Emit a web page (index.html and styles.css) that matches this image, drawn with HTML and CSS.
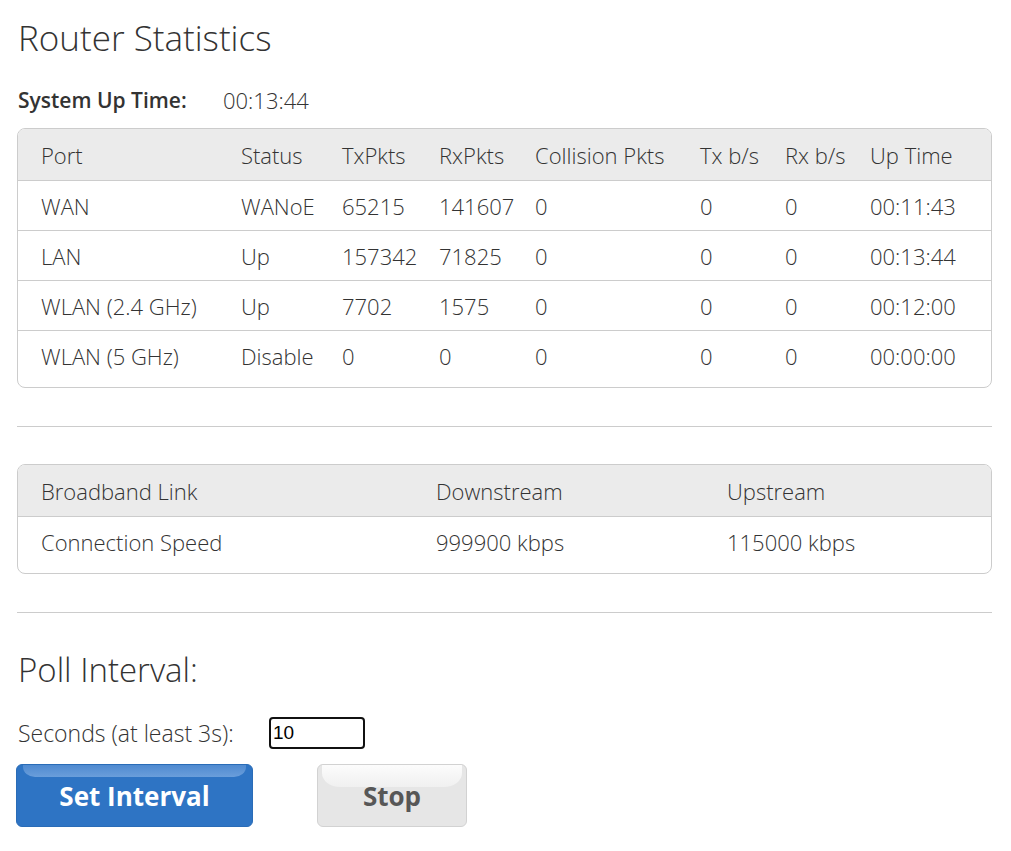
FILE: index.html
```html
<!DOCTYPE html>
<html>
<head>
<meta charset="utf-8">
<link rel="stylesheet" href="styles.css">
</head>
<body>
<div class="page">
  <h1 class="title">Router Statistics</h1>
  <div class="uptime"><span class="uptime-label">System Up Time:</span><span class="uptime-value">00:13:44</span></div>

  <div class="box box-ports">
    <table class="grid ports">
      <colgroup>
        <col class="c1"><col class="c2"><col class="c3"><col class="c4"><col class="c5"><col class="c6"><col class="c7"><col class="c8">
      </colgroup>
      <thead>
        <tr><th>Port</th><th>Status</th><th>TxPkts</th><th>RxPkts</th><th>Collision Pkts</th><th>Tx b/s</th><th>Rx b/s</th><th>Up Time</th></tr>
      </thead>
      <tbody>
        <tr><td>WAN</td><td>WANoE</td><td>65215</td><td>141607</td><td>0</td><td>0</td><td>0</td><td>00:11:43</td></tr>
        <tr><td>LAN</td><td>Up</td><td>157342</td><td>71825</td><td>0</td><td>0</td><td>0</td><td>00:13:44</td></tr>
        <tr><td>WLAN (2.4 GHz)</td><td>Up</td><td>7702</td><td>1575</td><td>0</td><td>0</td><td>0</td><td>00:12:00</td></tr>
        <tr><td>WLAN (5 GHz)</td><td>Disable</td><td>0</td><td>0</td><td>0</td><td>0</td><td>0</td><td>00:00:00</td></tr>
      </tbody>
    </table>
  </div>

  <hr class="rule">

  <div class="box">
    <table class="grid link">
      <colgroup><col class="l1"><col class="l2"><col class="l3"></colgroup>
      <thead>
        <tr><th>Broadband Link</th><th>Downstream</th><th>Upstream</th></tr>
      </thead>
      <tbody>
        <tr><td>Connection Speed</td><td>999900 kbps</td><td>115000 kbps</td></tr>
      </tbody>
    </table>
  </div>

  <hr class="rule">

  <h2 class="subtitle">Poll Interval:</h2>
  <div class="field">
    <label class="field-label" for="secs">Seconds (at least 3s):</label>
    <input id="secs" class="field-input" type="text" value="10">
  </div>
  <div class="actions">
    <button class="btn btn-primary">Set Interval</button>
    <button class="btn btn-secondary">Stop</button>
  </div>
</div>
</body>
</html>
```

FILE: styles.css
```css
html, body {
  margin: 0;
  padding: 0;
  background: #ffffff;
}
body {
  font-family: "Open Sans", "Noto Sans", sans-serif;
  color: #333333;
}
.page {
  padding: 0 19px 0 17px;
}
.title {
  margin: 0;
  padding-top: 17px;
  font-size: 35px;
  line-height: 42px;
  font-weight: 300;
  padding-left: 1px;
  color: #333;
}
.uptime {
  margin-top: 30px;
  display: flex;
  align-items: center;
  height: 22px;
  padding-left: 1px;
}
.uptime-label {
  font-size: 21px;
  font-weight: 600;
  width: 205px;
}
.uptime-value {
  font-size: 22px;
  font-weight: 300;
}
.box {
  border: 1px solid #cccccc;
  border-radius: 8px;
  overflow: hidden;
  padding-bottom: 7px;
}
.box-ports {
  margin-top: 17px;
}
.grid {
  width: 100%;
  border-collapse: collapse;
  table-layout: fixed;
  font-size: 22px;
  font-weight: 300;
}
.grid th, .grid td {
  text-align: left;
  font-weight: 300;
  padding: 1px 0 0 0;
  height: 48px;
  white-space: nowrap;
}
.grid th {
  background: #ebebeb;
  height: 50px;
}
.grid tbody tr td {
  border-top: 1px solid #cccccc;
}
.grid th:first-child, .grid td:first-child {
  padding-left: 23px;
}
.c1 { width: 223px; }
.c2 { width: 101px; }
.c3 { width: 97px; }
.c4 { width: 96px; }
.c5 { width: 165px; }
.c6 { width: 85px; }
.c7 { width: 85px; }
.c8 { width: auto; }
.l1 { width: 418px; }
.l2 { width: 291px; }
.l3 { width: auto; }
.rule {
  border: 0;
  border-top: 1px solid #cccccc;
  margin: 38px 0 37px 0;
}
.subtitle {
  margin: 0;
  font-size: 33px;
  line-height: 40px;
  font-weight: 300;
  padding-left: 1px;
}
.field {
  display: flex;
  align-items: center;
  margin-top: 27px;
  padding-left: 1px;
}
.field-label {
  font-size: 23px;
  font-weight: 300;
  width: 251px;
}
.field-input {
  box-sizing: border-box;
  width: 96px;
  height: 32px;
  border: 2px solid #111111;
  border-radius: 4px;
  font-family: "Liberation Sans", Arial, sans-serif;
  font-size: 19px;
  padding: 2px 2px;
  color: #000;
}
.actions {
  display: flex;
  gap: 64px;
  margin-top: 15px;
}
.btn {
  position: relative;
  box-sizing: border-box;
  height: 63px;
  border-radius: 6px;
  font-family: "Open Sans", "Noto Sans", sans-serif;
  font-size: 26px;
  font-weight: 700;
  cursor: pointer;
  overflow: hidden;
  padding: 0;
}
.btn::before {
  content: "";
  position: absolute;
  left: 6px;
  right: 6px;
  top: 0;
  height: 12px;
  border-radius: 0 0 12px 12px / 0 0 10px 10px;
}
.btn-primary {
  width: 237px;
  margin-left: -1px;
  background: #2e74c4;
  border: 1px solid #2a6cb7;
  color: #ffffff;
}
.btn-primary::before {
  background: linear-gradient(#4f8ad0, #6a9edb);
}
.btn-secondary {
  width: 150px;
  background: #e6e6e6;
  border: 1px solid #d2d2d2;
  color: #575757;
}
.btn-secondary::before {
  left: 4px;
  right: 4px;
  height: 22px;
  background: linear-gradient(#fcfcfc, #f0f0f0);
  border-radius: 0 0 18px 18px / 0 0 14px 14px;
}
```
